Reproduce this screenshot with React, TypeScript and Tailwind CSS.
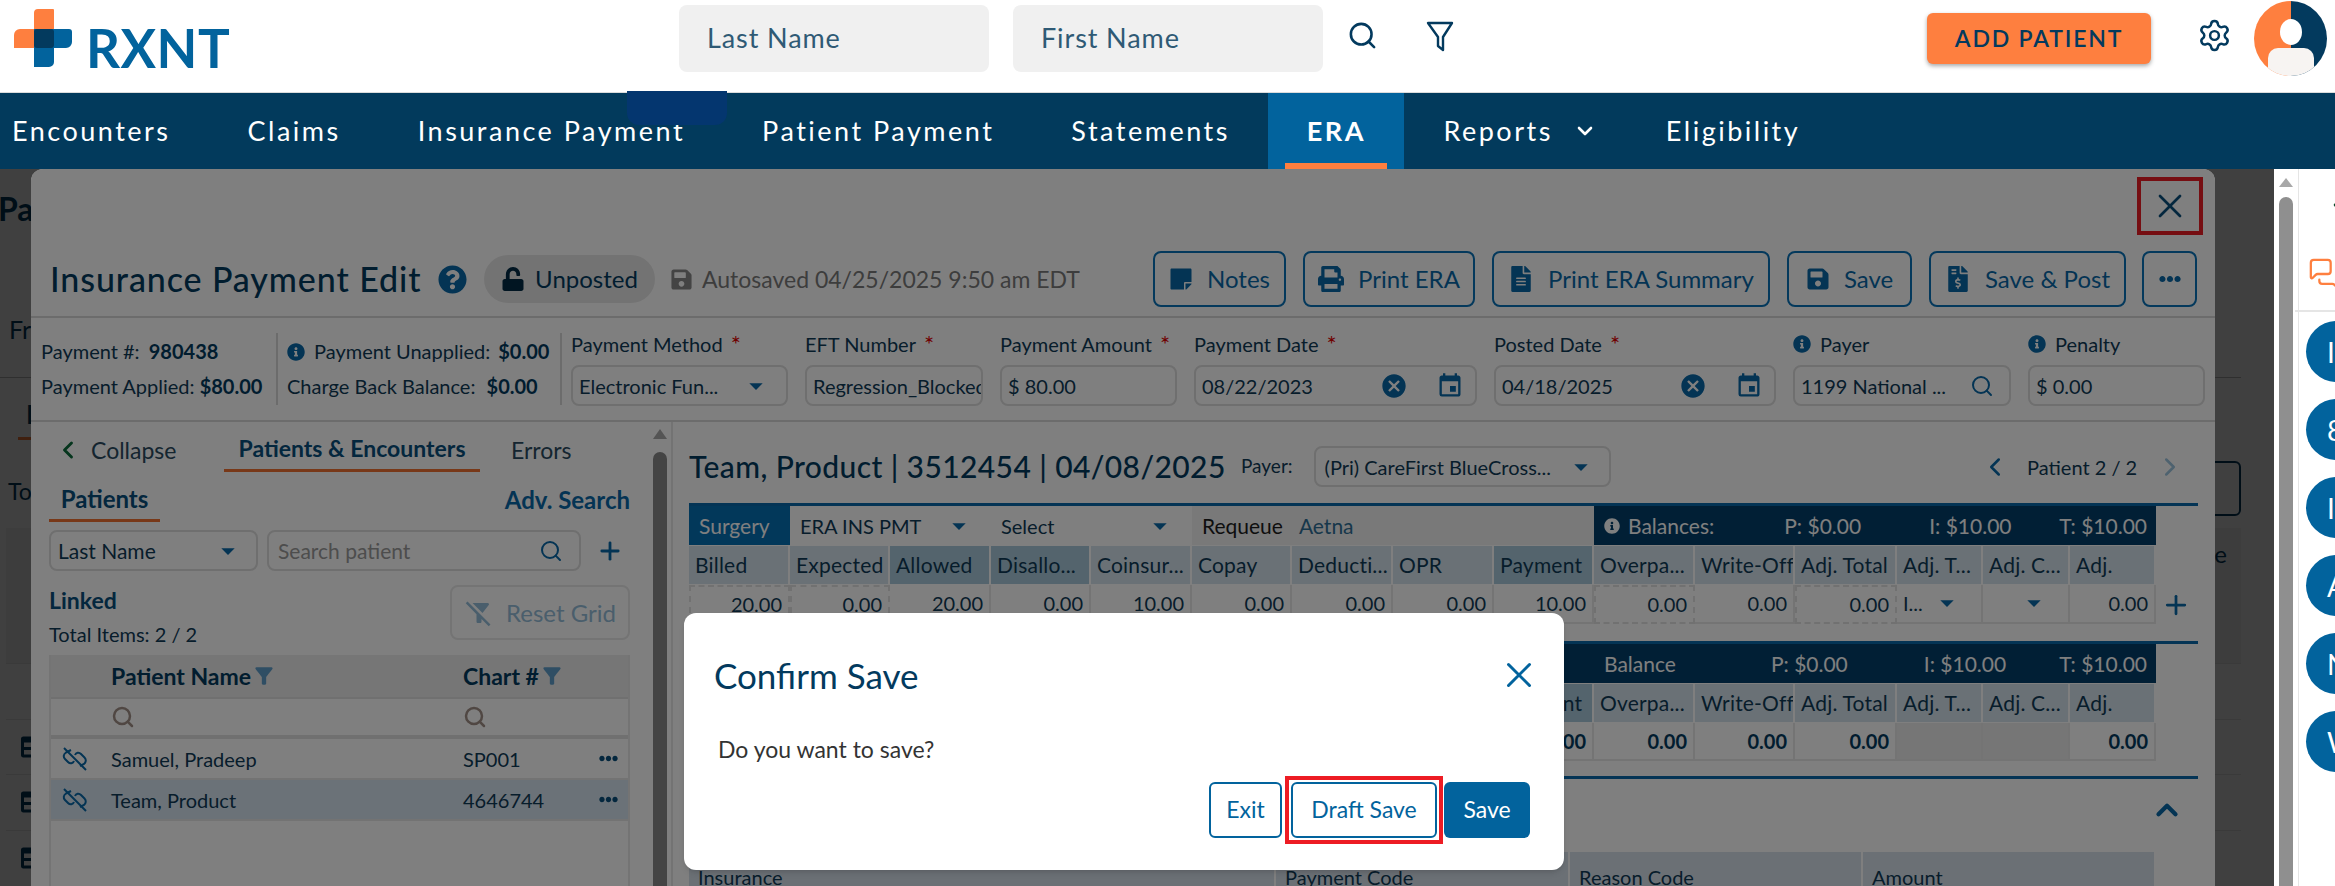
import React from 'react';
import { ChevronDown, ChevronLeft, ChevronRight, ChevronUp, MessagesSquare, Plus, Search, Settings, X } from 'lucide-react';
import { FaEllipsisH, FaFileAlt, FaFileInvoiceDollar, FaInfoCircle, FaPrint, FaQuestionCircle, FaSave, FaStickyNote, FaTable, FaUnlock } from 'react-icons/fa';
import { MdArrowDropDown, MdCancel, MdEvent, MdFilterAlt, MdFilterAltOff } from 'react-icons/md';

const navItems = ['Encounters', 'Claims', 'Insurance Payment', 'Patient Payment', 'Statements'];
const columns = ['Billed', 'Expected', 'Allowed', 'Disallo...', 'Coinsur...', 'Copay', 'Deducti...', 'OPR', 'Payment', 'Overpa...', 'Write-Off', 'Adj. Total', 'Adj. T...', 'Adj. C...', 'Adj.'];
const highlighted = ['Allowed', 'Disallo...', 'Payment'];
const values = ['20.00', '0.00', '20.00', '0.00', '10.00', '0.00', '0.00', '0.00', '10.00', '0.00', '0.00', '0.00', '', '', '0.00'];
const dashed = [0, 1, 9, 11];

function Logo() {
  return (
    <div className="flex items-start ml-[14px] w-[213px]">
      <svg width="58" height="58" viewBox="0 0 58 58" className="shrink-0">
        <path d="M24 0h15a1 1 0 0 1 1 1v38H0V26a6 6 0 0 1 6-6h14V4a4 4 0 0 1 4-4z" fill="#fe7f3f" />
        <path d="M20 20h35a3 3 0 0 1 3 3v10a6 6 0 0 1-6 6H40v14a5 5 0 0 1-5 5H20z" fill="#02639d" />
        <rect x="20" y="20" width="20" height="19" rx="3" fill="#033a5e" />
      </svg>
      <span className="ml-[14px] mt-[12px] text-[53px] leading-none font-bold text-[#02639d] tracking-[0.5px]">RXNT</span>
    </div>
  );
}

function Avatar() {
  return (
    <svg width="73" height="75" viewBox="0 0 73 75">
      <defs>
        <clipPath id="avatar-clip"><ellipse cx="36.5" cy="37.5" rx="36.5" ry="37.5" /></clipPath>
      </defs>
      <g clipPath="url(#avatar-clip)">
        <rect width="37" height="75" fill="#fe7f3f" />
        <rect x="37" width="36" height="75" fill="#033a5e" />
        <ellipse cx="37" cy="31" rx="11" ry="13" fill="#ffffff" />
        <rect x="14" y="47" width="46" height="34" rx="10" fill="#f7f4f2" />
      </g>
    </svg>
  );
}

function TopBar() {
  return (
    <header className="h-[93px] bg-white flex items-start border-b border-[#dcdcdc] shrink-0">
      <div className="mt-[9px]"><Logo /></div>
      <div className="ml-[452px] mt-[5px] w-[310px] h-[67px] rounded-lg bg-[#f0f0f0] flex items-center pl-[28px] text-[27px] tracking-[0.9px] text-[#2f5a75]">Last Name</div>
      <div className="ml-[24px] mt-[5px] w-[310px] h-[67px] rounded-lg bg-[#f0f0f0] flex items-center pl-[28px] text-[27px] tracking-[0.9px] text-[#2f5a75]">First Name</div>
      <Search size={31} strokeWidth={2} className="ml-[24px] mt-[20px] text-[#033a5e]" />
      <svg width="28" height="31" viewBox="0 0 28 31" className="ml-[48px] mt-[21px]" fill="none" stroke="#033a5e" strokeWidth="2.4" strokeLinejoin="round">
        <path d="M2 2h24L17 16v13l-5-4v-9z" />
      </svg>
      <button className="ml-[473px] mt-[13px] w-[224px] h-[51px] rounded-md bg-[#fe7f3f] shadow-[0_2px_4px_rgba(0,0,0,0.35)] text-[23px] font-semibold tracking-[1.8px] text-[#033a5e]">ADD PATIENT</button>
      <Settings size={35} strokeWidth={1.7} className="ml-[46px] mt-[18px] text-[#033a5e]" />
      <div className="ml-[22px] mt-[1px]"><Avatar /></div>
    </header>
  );
}

function NavBar() {
  return (
    <nav className="relative h-[76px] bg-[#023a5c] flex items-stretch shrink-0 text-white text-[27px] tracking-[2.5px] pl-[12px]">
      <div className="flex items-center -ml-[38.5px]">
        {navItems.map((item) => (
          <span key={item} className="px-[38.5px]">{item}</span>
        ))}
      </div>
      <div className="relative w-[136px] bg-[#02639d] flex items-center justify-center font-bold">
        ERA
        <div className="absolute bottom-0 left-[17px] right-[17px] h-[6px] bg-[#fe7f3f]" />
      </div>
      <div className="flex items-center pl-[39px] pr-[30px]">
        Reports
        <ChevronDown size={24} strokeWidth={2.6} className="ml-[20px]" />
      </div>
      <div className="flex items-center px-[39px]">Eligibility</div>
      <div className="absolute left-[627px] -top-[2px] w-[100px] h-[34px] rounded-b-xl bg-[#04366f]" />
    </nav>
  );
}

function BackgroundPage() {
  return (
    <div className="w-[2241px] h-full bg-white flex flex-col text-[#033a5e]">
      <div className="h-[209px] border-b border-[#bbbbbb] pt-[16px] text-[32px] font-bold -ml-[2px]">
        Payments
        <div className="mt-[78px] ml-[11px] text-[25px] font-normal">From</div>
      </div>
      <div className="h-[58px] pt-[16px] ml-[22px]">
        <span className="inline-block border-b-[3px] border-[#fe7f3f] text-[27px] font-bold pb-[2px] w-[60px] -ml-[4px] pl-[8px]">Pa</span>
      </div>
      <div className="flex justify-between h-[92px] pl-[8px]">
        <span className="mt-[38px] text-[23px]">Total</span>
        <div className="flex flex-col items-end">
          <div className="mt-[25px] w-[60px] h-[55px] border-2 border-[#033a5e] rounded-md" />
        </div>
      </div>
      <div className="ml-[6px] flex-1 flex flex-col">
        <div className="h-[135px] bg-[#f4f4f4] flex justify-end items-start pt-[8px] pr-[14px] text-[24px]">Name</div>
        {[0, 1, 2, 3].map((row) => (
          <div key={row} className="h-[55.5px] border-t border-[#e7e7e7] flex items-center pl-[15px]">
            {row > 0 && <FaTable size={24} />}
          </div>
        ))}
      </div>
    </div>
  );
}

function OutlineButton({ icon, label, className }: { icon: React.ReactNode; label: string; className: string }) {
  return (
    <button className={`h-[56px] border-2 border-[#0872b8] rounded-lg flex items-center justify-center gap-[14px] text-[24px] text-[#0868a8] ${className}`}>
      {icon}
      {label}
    </button>
  );
}

function Toolbar() {
  const iconClass = 'text-[#0868a8]';
  return (
    <div className="flex items-center mt-[5px] pl-[19px] pr-[18px] h-[56px]">
      <span className="text-[34px] font-medium tracking-[0.9px] text-[#033a5e] w-[372px] whitespace-nowrap -mt-[2px]">Insurance Payment Edit</span>
      <FaQuestionCircle size={29} className="ml-[16px] text-[#0868a8]" />
      <div className="ml-[17px] w-[171px] h-[48px] rounded-full bg-[#e7e7e7] flex items-center justify-center gap-[10px] text-[24px] text-[#033a5e]">
        <FaUnlock size={24} className="text-[#022a44]" />
        Unposted
      </div>
      <FaSave size={23} className="ml-[15px] text-[#888888]" />
      <span className="ml-[9px] text-[23px] text-[#7b7b7b] whitespace-nowrap">Autosaved 04/25/2025 9:50 am EDT</span>
      <div className="ml-auto flex gap-[17px]">
        <OutlineButton className="w-[133px]" label="Notes" icon={<FaStickyNote size={24} className={iconClass} />} />
        <OutlineButton className="w-[172px]" label="Print ERA" icon={<FaPrint size={26} className={iconClass} />} />
        <OutlineButton className="w-[278px]" label="Print ERA Summary" icon={<FaFileAlt size={26} className={iconClass} />} />
        <OutlineButton className="w-[125px]" label="Save" icon={<FaSave size={24} className={iconClass} />} />
        <OutlineButton className="w-[197px]" label="Save &amp; Post" icon={<FaFileInvoiceDollar size={26} className={iconClass} />} />
        <OutlineButton className="w-[55px] -ml-[1px]" label="" icon={<FaEllipsisH size={22} className={iconClass} />} />
      </div>
    </div>
  );
}

function Field({ label, required, info, className, children }: { label: string; required?: boolean; info?: boolean; className: string; children: React.ReactNode }) {
  return (
    <div className={`shrink-0 ${className}`}>
      <div className="h-[24px] mt-[14px] flex items-center text-[20px] text-[#0f3a57] whitespace-nowrap">
        {info && <FaInfoCircle size={18} className="mr-[9px] text-[#0868a8]" />}
        {label}
        {required && <span className="ml-[8px] text-[24px] leading-none text-[#e00000]">*</span>}
      </div>
      <div className="mt-[9px] h-[41px] border-2 border-[#dedede] rounded-lg bg-white flex items-center pl-[6px] pr-[8px] text-[20px] text-[#0f3a57] overflow-hidden whitespace-nowrap">
        {children}
      </div>
    </div>
  );
}

function DateValue({ value }: { value: string }) {
  return (
    <>
      <span className="flex-1">{value}</span>
      <MdCancel size={28} className="text-[#0868a8]" />
      <MdEvent size={28} className="ml-[28px] mr-[3px] text-[#0868a8]" />
    </>
  );
}

function SummaryBar() {
  const strong = 'font-bold text-[#033a5e]';
  return (
    <div className="h-[106px] border-y-2 border-[#d8d8d8] flex items-start pl-[10px] text-[20px] text-[#0f3a57] shrink-0">
      <div className="w-[235px] shrink-0 pt-[16px] leading-[35px] whitespace-nowrap">
        <div>Payment #: <span className={`ml-[4px] ${strong}`}>980438</span></div>
        <div>Payment Applied: <span className={strong}>$80.00</span></div>
      </div>
      <div className="w-[2px] h-[72px] mt-[15px] bg-[#d8d8d8] shrink-0" />
      <div className="w-[282px] shrink-0 pl-[9px] pt-[16px] leading-[35px] whitespace-nowrap">
        <div className="flex items-center">
          <FaInfoCircle size={18} className="mr-[9px] text-[#0868a8]" />
          Payment Unapplied: <span className={`ml-[8px] ${strong}`}>$0.00</span>
        </div>
        <div>Charge Back Balance: <span className={`ml-[6px] ${strong}`}>$0.00</span></div>
      </div>
      <div className="w-[2px] h-[72px] mt-[15px] bg-[#d8d8d8] shrink-0" />
      <div className="flex gap-[17px] ml-[9px]">
        <Field className="w-[217px]" label="Payment Method" required>
          <span className="flex-1">Electronic Fun...</span>
          <MdArrowDropDown size={32} className="text-[#0868a8] mr-[6px]" />
        </Field>
        <Field className="w-[178px]" label="EFT Number" required>Regression_Blocked</Field>
        <Field className="w-[177px]" label="Payment Amount" required>$ 80.00</Field>
        <Field className="w-[283px]" label="Payment Date" required><DateValue value="08/22/2023" /></Field>
        <Field className="w-[282px]" label="Posted Date" required><DateValue value="04/18/2025" /></Field>
        <Field className="w-[218px]" label="Payer" info>
          <span className="flex-1">1199 National ...</span>
          <Search size={24} className="text-[#0868a8] mr-[7px]" />
        </Field>
        <Field className="w-[177px]" label="Penalty" info>$ 0.00</Field>
      </div>
    </div>
  );
}

function UnlinkIcon() {
  return (
    <svg width="26" height="24" viewBox="0 0 26 24" fill="none" stroke="#0868a8" strokeWidth="2">
      <path d="M9 3 4 5.5C1.5 7 1 10 3 12l3 3c2 2 5 1.500 6-1" />
      <path d="M13 8c1-2.500 4-3 6-1l3.500 3.500c2 2 1.500 5-.5 6.500l-4 2" />
      <path d="M2 1l22 22" />
    </svg>
  );
}

function PatientsPanel() {
  return (
    <div className="w-[622px] shrink-0 pl-[18px] text-[#0f3a57]">
      <div className="h-[50px] flex items-stretch -ml-[3px]">
        <div className="w-[178px] pl-[8px] pt-[6px] flex items-center text-[23px]">
          <ChevronLeft size={28} strokeWidth={2.5} className="text-[#0b6b3a] mr-[9px]" />
          <span className="text-[#2a4a60]">Collapse</span>
        </div>
        <div className="w-[256px] pt-[6px] border-b-[3px] border-[#f07030] flex items-center justify-center text-[23px] font-bold text-[#084f7c]">Patients &amp; Encounters</div>
        <div className="ml-[31px] pt-[6px] flex items-center text-[23px] text-[#2a4a60]">Errors</div>
      </div>
      <div className="h-[50px] w-[581px] flex items-stretch justify-between">
        <div className="w-[111px] pt-[6px] border-b-[3px] border-[#f07030] flex items-center justify-center text-[24px] font-bold text-[#084f7c]">Patients</div>
        <div className="pt-[6px] flex items-center text-[24px] font-bold text-[#0868a8]">Adv. Search</div>
      </div>
      <div className="mt-[8px] flex items-center h-[41px]">
        <div className="w-[209px] h-full border-2 border-[#dedede] rounded-lg bg-white flex items-center pl-[7px] text-[21px]">
          <span className="flex-1">Last Name</span>
          <MdArrowDropDown size={32} className="text-[#0868a8] mr-[12px]" />
        </div>
        <div className="ml-[9px] w-[314px] h-full border-2 border-[#dedede] rounded-lg bg-white flex items-center pl-[9px] text-[21px] text-[#9a9a9a]">
          <span className="flex-1">Search patient</span>
          <Search size={24} className="text-[#0868a8] mr-[16px]" />
        </div>
        <Plus size={28} strokeWidth={2.4} className="ml-[15px] text-[#0868a8]" />
      </div>
      <div className="mt-[14px] w-[581px] h-[55px] flex justify-between">
        <div>
          <div className="h-[30px] text-[23px] font-bold text-[#084f7c] leading-[30px]">Linked</div>
          <div className="mt-[4px] text-[20px] text-[#0f3a57]">Total Items: 2 / 2</div>
        </div>
        <div className="w-[180px] h-[55px] border-2 border-[#e8e8e8] rounded-lg flex items-center justify-center gap-[12px] text-[24px] text-[#94bdd8]">
          <MdFilterAltOff size={30} />
          Reset Grid
        </div>
      </div>
      <div className="mt-[15px] w-[581px] border-x-2 border-[#e8e8e8] h-[250px]">
        <div className="h-[42px] bg-[#ececec] grid grid-cols-[60px_352px_1fr] items-center text-[23px] font-bold text-[#033a5e]">
          <span />
          <div className="flex items-center">Patient Name<MdFilterAlt size={26} className="text-[#5e9cc8]" /></div>
          <div className="flex items-center">Chart #<MdFilterAlt size={26} className="text-[#5e9cc8]" /></div>
        </div>
        <div className="h-[42px] border-y-2 border-b-[4px] border-[#e0e0e0] grid grid-cols-[60px_352px_1fr] items-center text-[#a08f86]">
          <span />
          <Search size={24} strokeWidth={2.5} />
          <Search size={24} strokeWidth={2.5} />
        </div>
        {[['Samuel, Pradeep', 'SP001'], ['Team, Product', '4646744']].map(([name, chart], index) => (
          <div key={name} className={`h-[41px] border-b-2 border-[#e6e6e6] grid grid-cols-[60px_352px_1fr_29px] items-center text-[20px] ${index === 1 ? 'bg-[#d6e4f0]' : ''}`}>
            <div className="pl-[11px]"><UnlinkIcon /></div>
            <span>{name}</span>
            <span>{chart}</span>
            <FaEllipsisH size={19} className="text-[#084f7c]" />
          </div>
        ))}
      </div>
    </div>
  );
}

function ColumnHeaders() {
  return (
    <>
      {columns.map((column) => (
        <div key={column} className={`h-[38px] mt-[1px] border-r-2 border-[#ffffff] flex items-center pl-[6px] text-[21px] tracking-[0.2px] text-[#0f3a57] whitespace-nowrap overflow-hidden ${highlighted.includes(column) ? 'bg-[#a9c9da]' : 'bg-[#d5e3ec]'}`}>
          {column}
        </div>
      ))}
    </>
  );
}

function BalanceCell({ title, icon, offsetClass, gapClass }: { title: string; icon?: boolean; offsetClass: string; gapClass: string }) {
  return (
    <div className="col-span-6 h-[39px] bg-[#033f6b] flex items-center pl-[10px] pr-[9px] text-[21px] text-[#ffffff] whitespace-nowrap">
      {icon && <FaInfoCircle size={16} className="mr-[8px]" />}
      {title}
      <span className={offsetClass}>P: $0.00</span>
      <span className={gapClass}>I: $10.00</span>
      <span className="ml-auto">T: $10.00</span>
    </div>
  );
}

function EncounterGrid() {
  const grid = 'grid grid-cols-[101px_100px_101px_100px_101px_100px_101px_101px_100px_101px_100px_102px_86px_87px_86px] w-[1467px]';
  return (
    <div className="relative w-[1509px] border-t-[3px] border-[#0868aa]">
      <div className={grid}>
        <div className="h-[39px] bg-[#0570b5] flex items-center pl-[10px] text-[21px] text-white">Surgery</div>
        <div className="col-span-2 h-[39px] bg-white flex items-center px-[10px] text-[20px] text-[#0f3a57]">
          <span className="flex-1">ERA INS PMT</span>
          <MdArrowDropDown size={32} className="text-[#0868a8] mr-[6px]" />
        </div>
        <div className="col-span-2 h-[39px] bg-white flex items-center px-[10px] text-[20px] text-[#0f3a57]">
          <span className="flex-1">Select</span>
          <MdArrowDropDown size={32} className="text-[#0868a8] mr-[6px]" />
        </div>
        <div className="col-span-4 h-[39px] bg-[#f2f2f2] flex items-center pl-[10px] text-[21px] text-[#1d1d1d]">
          Requeue<span className="ml-[16px] text-[#2f6e96]">Aetna</span>
        </div>
        <BalanceCell title="Balances:" icon offsetClass="ml-[70px]" gapClass="ml-[68px]" />
        <ColumnHeaders />
        {values.map((value, index) => (
          <div key={index} className={`h-[39px] mt-[1px] flex items-center justify-end pr-[6px] pb-[2px] text-[20px] text-[#0f3a57] ${dashed.includes(index) ? 'border-2 border-dashed border-[#e2e2e2]' : 'border-r-2 border-b-2 border-[#e8e8e8]'}`}>
            {index === 12 && <span className="flex-1 pl-[6px]">I...</span>}
            {(index === 12 || index === 13) && <MdArrowDropDown size={32} className="text-[#0868a8] mr-[12px]" />}
            {value}
          </div>
        ))}
      </div>
      <Plus size={30} strokeWidth={2.2} className="absolute right-[7px] top-[84px] text-[#0868a8]" />
    </div>
  );
}

function TotalsGrid() {
  const grid = 'grid grid-cols-[101px_100px_101px_100px_101px_100px_101px_101px_100px_101px_100px_102px_86px_87px_86px] w-[1467px]';
  return (
    <div className="mt-[17px] w-[1509px] border-t-[3px] border-[#0868aa]">
      <div className={grid}>
        <div className="col-span-9 h-[39px] bg-[#033f6b]" />
        <BalanceCell title="Balance" offsetClass="ml-[95px]" gapClass="ml-[76px]" />
        <ColumnHeaders />
        {values.map((value, index) => (
          <div key={index} className={`h-[38px] mt-[1px] flex items-center justify-end pr-[6px] text-[20px] font-bold text-[#033a5e] border-r-2 border-b-2 border-[#e8e8e8] ${index === 12 || index === 13 ? 'bg-[#ececec]' : ''}`}>
            {value}
          </div>
        ))}
      </div>
    </div>
  );
}

function EncounterPanel() {
  return (
    <div className="flex-1 border-l-2 border-[#e6e6e6] ml-[4px] pl-[16px] text-[#0f3a57]">
      <div className="mt-[24px] h-[41px] flex items-center w-[1509px]">
        <span className="text-[30px] font-medium tracking-[0.4px] text-[#033a5e] w-[535px] whitespace-nowrap">Team, Product | 3512454 | 04/08/2025</span>
        <span className="ml-[17px] text-[19px]">Payer:</span>
        <div className="ml-[21px] w-[297px] h-full border-2 border-[#dedede] rounded-lg flex items-center pl-[9px] text-[20px]">
          <span className="flex-1">(Pri) CareFirst BlueCross...</span>
          <MdArrowDropDown size={32} className="text-[#0868a8] mr-[12px]" />
        </div>
        <ChevronLeft size={30} strokeWidth={2} className="ml-auto text-[#0868a8]" />
        <span className="ml-[17px] text-[20px] w-[107px] whitespace-nowrap">Patient 2 / 2</span>
        <ChevronRight size={30} strokeWidth={2} className="ml-[21px] mr-[13px] text-[#9cc4de]" />
      </div>
      <div className="mt-[16px]"><EncounterGrid /></div>
      <TotalsGrid />
      <div className="mt-[15px] w-[1509px] h-[76px] border-t-[3px] border-[#0868aa] flex justify-end items-start">
        <ChevronUp size={34} strokeWidth={3} className="mt-[14px] mr-[14px] text-[#0868a8]" />
      </div>
      <div className="w-[1467px] h-[40px] bg-[#d6e0ea] grid grid-cols-[587px_294px_293px_293px] text-[20px]">
        {['Insurance', 'Payment Code', 'Reason Code', 'Amount'].map((title) => (
          <div key={title} className="pl-[9px] pt-[10px] border-r-2 border-[#ffffff]">{title}</div>
        ))}
      </div>
    </div>
  );
}

function EditPanel() {
  return (
    <section className="absolute left-[31px] top-0 bottom-0 w-[2184px] rounded-t-xl bg-white overflow-hidden flex flex-col">
      <div className="h-[77px] flex justify-end shrink-0">
        <div className="mt-[8px] mr-[12px] w-[66px] h-[58px] border-4 border-[#ed1c24] flex items-center justify-center">
          <X size={40} strokeWidth={1.6} className="text-[#084f7c]" />
        </div>
      </div>
      <Toolbar />
      <div className="mt-[9px]"><SummaryBar /></div>
      <div className="flex flex-1 min-h-0">
        <PatientsPanel />
        <div className="w-[14px] relative shrink-0">
          <div className="mt-[30px] h-[500px] rounded-full bg-[#888888]" />
          <div className="absolute top-[7px] left-0 w-0 h-0 border-x-[7px] border-x-transparent border-b-[10px] border-b-[#a8a8a8]" />
        </div>
        <EncounterPanel />
      </div>
      <div className="absolute inset-0 bg-[rgba(0,0,0,0.5)]" />
    </section>
  );
}

function ConfirmDialog() {
  return (
    <div className="absolute left-[684px] top-[444px] w-[880px] h-[257px] rounded-xl bg-white shadow-md">
      <div className="flex items-center justify-between pl-[30px] pr-[24px] pt-[40px] h-[84px]">
        <span className="text-[35px] text-[#033a5e]">Confirm Save</span>
        <X size={42} strokeWidth={1.7} className="text-[#02639d]" />
      </div>
      <div className="mt-[35px] pl-[34px] text-[23px] text-[#333333]">Do you want to save?</div>
      <div className="mt-[15px] flex justify-end pr-[34px] text-[23px]">
        <button className="w-[73px] h-[56px] rounded-md border-2 border-[#02639d] text-[#02639d] mr-[3px]">Exit</button>
        <div className="border-4 border-[#ed1c24] -my-[6px] p-[2px] flex">
          <button className="w-[146px] h-[56px] rounded-md border-2 border-[#02639d] text-[#02639d]">Draft Save</button>
        </div>
        <button className="ml-[1px] w-[86px] h-[56px] rounded-md bg-[#02639d] text-white">Save</button>
      </div>
    </div>
  );
}

function SideRail() {
  return (
    <aside className="w-[61px] bg-white flex shrink-0 overflow-hidden">
      <div className="w-[25px] border-r border-[#e5e5e5] shrink-0 flex flex-col items-center pt-[9px]">
        <div className="w-0 h-0 border-x-[7px] border-x-transparent border-b-[9px] border-b-[#a8a8a8]" />
        <div className="mt-[10px] w-[14px] flex-1 rounded-t-full bg-[#8f8f8f]" />
      </div>
      <div className="flex-1 min-w-0">
        <div className="h-[88px] pt-[26px] pl-[29px] text-[#0b4a2a]">
          <ChevronLeft size={20} strokeWidth={4} />
        </div>
        <div className="h-[55px] pl-[13px] border-b-2 border-[#e5e5e5] -ml-[4px] mt-0">
          <MessagesSquare size={34} strokeWidth={1.6} className="text-[#fe7f3f]" />
        </div>
        <div className="flex flex-col gap-[17px] pt-[9px] pl-[7px]">
          {['IS', '8', 'IS', 'A', 'N', 'W'].map((text, index) => (
            <div key={index} className="w-[61px] h-[61px] shrink-0 rounded-full bg-[#02639d] flex items-center pl-[21px] text-[28px] text-white">{text}</div>
          ))}
        </div>
      </div>
    </aside>
  );
}

export default function App() {
  return (
    <div className="w-[2335px] h-[886px] overflow-hidden flex flex-col bg-white font-[Lato,sans-serif]">
      <TopBar />
      <NavBar />
      <div className="flex flex-1 min-h-0">
        <main className="relative w-[2274px] overflow-hidden bg-white shrink-0">
          <BackgroundPage />
          <div className="absolute inset-0 bg-[rgba(0,0,0,0.75)]" />
          <EditPanel />
          <ConfirmDialog />
        </main>
        <SideRail />
      </div>
    </div>
  );
}
